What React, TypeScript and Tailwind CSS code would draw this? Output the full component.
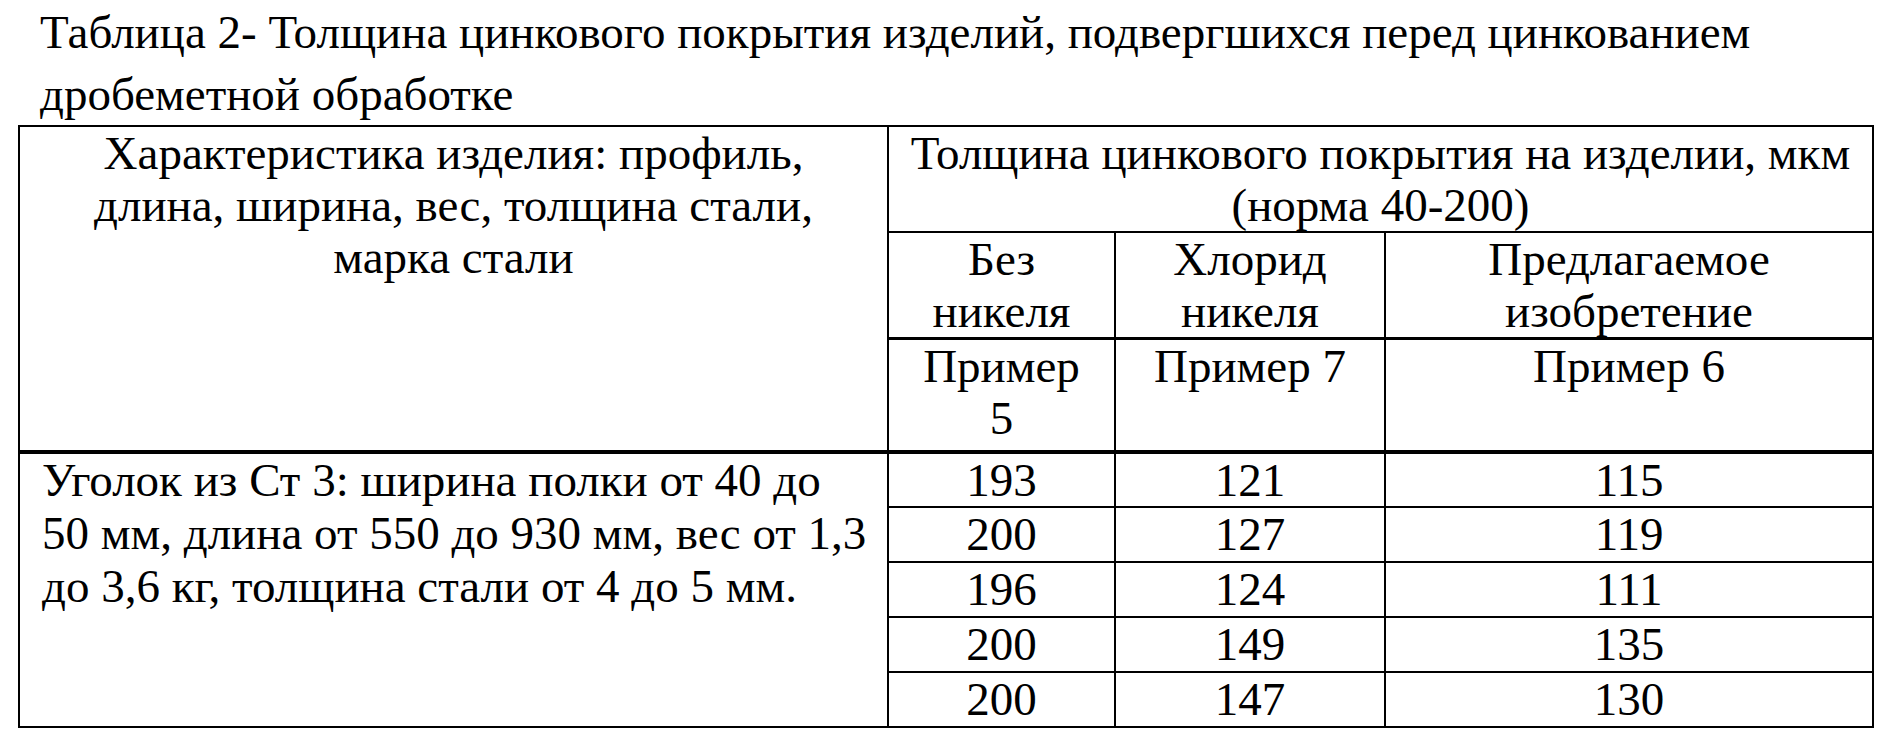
export default function App() {
  const rows = [
    [193, 121, 115],
    [200, 127, 119],
    [196, 124, 111],
    [200, 149, 135],
    [200, 147, 130],
  ];
  const cell = "border-2 border-black p-0";
  return (
    <div className="w-[1889px] h-[736px] overflow-hidden bg-white text-black [font-family:'Liberation_Serif','Times_New_Roman',serif] text-[47px]">
      <div className="pl-[40px] pt-[1px] leading-[62px]">
        Таблица 2- Толщина цинкового покрытия изделий, подвергшихся перед цинкованием
        <br />
        дробеметной обработке
      </div>
      <table className="ml-[18px] w-[1854px] table-fixed border-collapse leading-[52px]">
        <colgroup>
          <col className="w-[869px]" />
          <col className="w-[227px]" />
          <col className="w-[270px]" />
          <col className="w-[488px]" />
        </colgroup>
        <tbody>
          <tr className="h-[105px]">
            <td rowSpan={3} className={`${cell} border-b-4 text-center align-top`}>
              Характеристика изделия: профиль,
              <br />
              длина, ширина, вес, толщина стали,
              <br />
              марка стали
            </td>
            <td colSpan={3} className={`${cell} text-center align-top`}>
              Толщина цинкового покрытия на изделии, мкм
              <br />
              (норма 40-200)
            </td>
          </tr>
          <tr className="h-[105px]">
            <td className={`${cell} border-b-[3px] text-center align-top`}>
              Без
              <br />
              никеля
            </td>
            <td className={`${cell} border-b-[3px] text-center align-top`}>
              Хлорид
              <br />
              никеля
            </td>
            <td className={`${cell} border-b-[3px] text-center align-top`}>
              Предлагаемое
              <br />
              изобретение
            </td>
          </tr>
          <tr className="h-[113px]">
            <td className={`${cell} border-b-4 text-center align-top leading-[52px]`}>
              Пример
              <br />5
            </td>
            <td className={`${cell} border-b-4 text-center align-top`}>Пример 7</td>
            <td className={`${cell} border-b-4 text-center align-top`}>Пример 6</td>
          </tr>
          {rows.map((r, i) => (
            <tr key={i} className="h-[55px]">
              {i === 0 && (
                <td rowSpan={5} className={`${cell} align-top pl-[22px] leading-[53px]`}>
                  Уголок из Ст 3: ширина полки от 40 до
                  <br />
                  50 мм, длина от 550 до 930 мм, вес от 1,3
                  <br />
                  до 3,6 кг, толщина стали от 4 до 5 мм.
                </td>
              )}
              {r.map((v, j) => (
                <td key={j} className={`${cell} text-center align-middle`}>
                  {v}
                </td>
              ))}
            </tr>
          ))}
        </tbody>
      </table>
    </div>
  );
}
